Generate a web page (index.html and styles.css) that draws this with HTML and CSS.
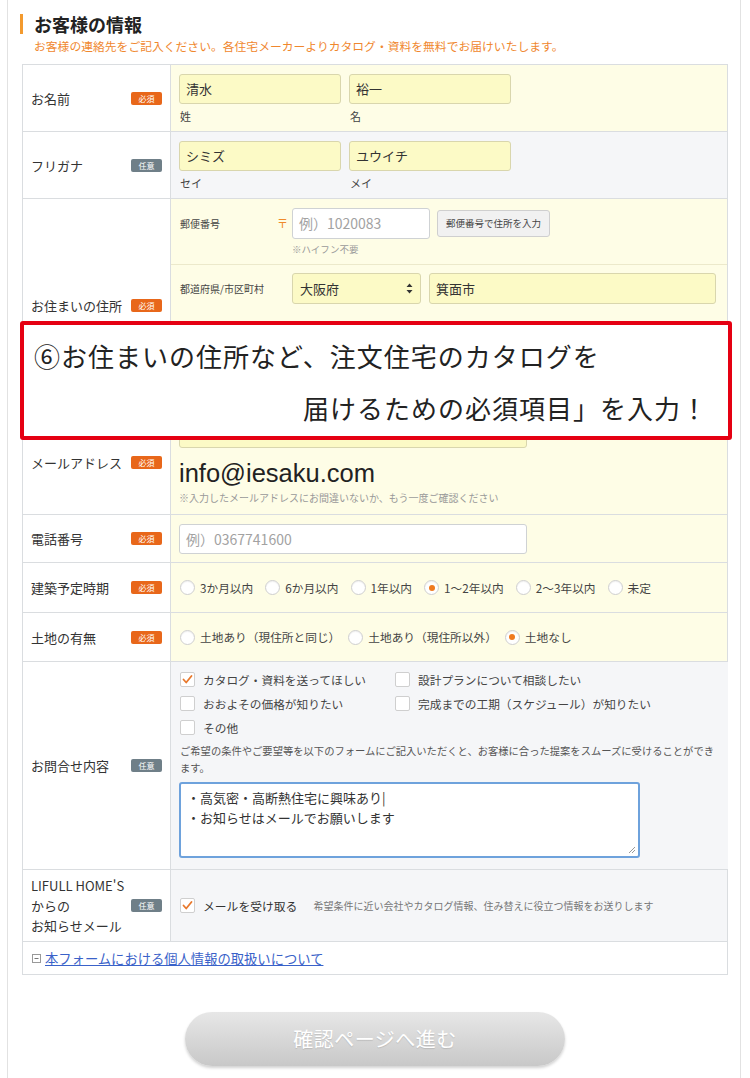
FILE: index.html
```html
<!DOCTYPE html>
<html lang="ja">
<head>
<meta charset="utf-8">
<title>お客様の情報</title>
<link rel="stylesheet" href="styles.css">
</head>
<body>
<div class="frame">
  <h2 class="title">お客様の情報</h2>
  <p class="lead">お客様の連絡先をご記入ください。各住宅メーカーよりカタログ・資料を無料でお届けいたします。</p>

  <div class="form">
    <div class="row h-name">
      <div class="label"><span>お名前</span><span class="badge req">必須</span></div>
      <div class="cell pad-top">
        <div class="pair">
          <div class="field"><div class="input yl">清水</div><div class="sub">姓</div></div>
          <div class="field"><div class="input yl">裕一</div><div class="sub">名</div></div>
        </div>
      </div>
    </div>

    <div class="row h-kana">
      <div class="label"><span>フリガナ</span><span class="badge opt">任意</span></div>
      <div class="cell opt-cell pad-top">
        <div class="pair">
          <div class="field"><div class="input yl">シミズ</div><div class="sub">セイ</div></div>
          <div class="field"><div class="input yl">ユウイチ</div><div class="sub">メイ</div></div>
        </div>
      </div>
    </div>

    <div class="row h-addr">
      <div class="label"><span>お住まいの住所</span><span class="badge req">必須</span></div>
      <div class="cell no-pad">
        <div class="subrow s-zip">
          <div class="sublabel"><span>郵便番号</span><span class="zipmark">〒</span></div>
          <div>
            <div class="zipline">
              <div class="input wh zip"><span class="ph">例）1020083</span></div>
              <div class="zipbtn">郵便番号で住所を入力</div>
            </div>
            <div class="hint">※ハイフン不要</div>
          </div>
        </div>
        <div class="subrow s-pref">
          <div class="sublabel"><span>都道府県/市区町村</span></div>
          <div class="prefline">
            <div class="input yl select"><span>大阪府</span>
              <svg width="7" height="11" viewBox="0 0 7 11"><path d="M3.5 0.5 L6.5 4 L0.5 4 Z M3.5 10.5 L6.5 7 L0.5 7 Z" fill="#333"/></svg>
            </div>
            <div class="input yl city">箕面市</div>
          </div>
        </div>
        <div class="subrow s-hidden">
          <div class="sublabel"></div>
          <div><div class="input yl wide"></div></div>
        </div>
        <div class="subrow s-hidden last">
          <div class="sublabel"></div>
          <div><div class="input wh wide"></div></div>
        </div>
      </div>
    </div>

    <div class="row h-mail">
      <div class="label"><span>メールアドレス</span><span class="badge req">必須</span></div>
      <div class="cell mail-cell">
        <div class="input yl mid"></div>
        <div class="mailtext">info@iesaku.com</div>
        <div class="note">※入力したメールアドレスにお間違いないか、もう一度ご確認ください</div>
      </div>
    </div>

    <div class="row h-tel">
      <div class="label"><span>電話番号</span><span class="badge req">必須</span></div>
      <div class="cell center">
        <div class="input wh mid"><span class="ph">例）0367741600</span></div>
      </div>
    </div>

    <div class="row h-when">
      <div class="label"><span>建築予定時期</span><span class="badge req">必須</span></div>
      <div class="cell center">
        <div class="radios">
          <span class="ropt"><span class="radio"></span>3か月以内</span>
          <span class="ropt"><span class="radio"></span>6か月以内</span>
          <span class="ropt"><span class="radio"></span>1年以内</span>
          <span class="ropt"><span class="radio on"></span>1〜2年以内</span>
          <span class="ropt"><span class="radio"></span>2〜3年以内</span>
          <span class="ropt"><span class="radio"></span>未定</span>
        </div>
      </div>
    </div>

    <div class="row h-land">
      <div class="label"><span>土地の有無</span><span class="badge req">必須</span></div>
      <div class="cell center">
        <div class="radios land">
          <span class="ropt"><span class="radio"></span>土地あり（現住所と同じ）</span>
          <span class="ropt"><span class="radio"></span>土地あり（現住所以外）</span>
          <span class="ropt"><span class="radio on"></span>土地なし</span>
        </div>
      </div>
    </div>

    <div class="row h-ask">
      <div class="label"><span>お問合せ内容</span><span class="badge opt">任意</span></div>
      <div class="cell opt-cell ask-cell">
        <div class="checks">
          <span class="copt"><span class="check on"><svg width="13" height="13" viewBox="0 0 13 13"><path d="M2.5 6.5 L5.2 9.5 L10.5 3" fill="none" stroke="#e8782c" stroke-width="1.8" stroke-linecap="round" stroke-linejoin="round"/></svg></span>カタログ・資料を送ってほしい</span>
          <span class="copt"><span class="check"></span>設計プランについて相談したい</span>
          <span class="copt"><span class="check"></span>おおよその価格が知りたい</span>
          <span class="copt"><span class="check"></span>完成までの工期（スケジュール）が知りたい</span>
          <span class="copt"><span class="check"></span>その他</span>
        </div>
        <p class="desc">ご希望の条件やご要望等を以下のフォームにご記入いただくと、お客様に合った提案をスムーズに受けることができます。</p>
        <div class="textarea">
          <div>・高気密・高断熱住宅に興味あり|</div>
          <div>・お知らせはメールでお願いします</div>
          <svg class="grip" width="8" height="8" viewBox="0 0 8 8"><path d="M7 1 L1 7 M7 4 L4 7" stroke="#999" stroke-width="1"/></svg>
        </div>
      </div>
    </div>

    <div class="row h-news">
      <div class="label multi"><span class="ml">LIFULL HOME'S<br>からの<br>お知らせメール</span><span class="badge opt">任意</span></div>
      <div class="cell opt-cell center">
        <div class="newsline">
          <span class="check on"><svg width="13" height="13" viewBox="0 0 13 13"><path d="M2.5 6.5 L5.2 9.5 L10.5 3" fill="none" stroke="#e8782c" stroke-width="1.8" stroke-linecap="round" stroke-linejoin="round"/></svg></span>
          <span class="newslabel">メールを受け取る</span>
          <span class="newsnote">希望条件に近い会社やカタログ情報、住み替えに役立つ情報をお送りします</span>
        </div>
      </div>
    </div>

    <div class="linkrow">
      <span class="toggle"><svg width="9" height="9" viewBox="0 0 9 9"><rect x="0.5" y="0.5" width="8" height="8" fill="#fff" stroke="#999"/><path d="M2.5 4.5 H6.5" stroke="#777"/></svg></span>
      <a class="plink" href="#">本フォームにおける個人情報の取扱いについて</a>
    </div>
  </div>

  <div class="btnwrap">
    <div class="submit">確認ページへ進む</div>
  </div>

  <div class="callout">
    <div class="l1">⑥お住まいの住所など、注文住宅のカタログを</div>
    <div class="l2">届けるための必須項目」を入力！</div>
  </div>
</div>
</body>
</html>
```

FILE: styles.css
```css
* { box-sizing: border-box; }
html, body { margin: 0; padding: 0; }
body {
  background: #fff;
  font-family: "Noto Sans CJK JP", "Noto Sans", sans-serif;
  color: #333;
  width: 750px;
  height: 1078px;
  overflow: hidden;
}
.frame {
  position: relative;
  margin: 0 9px 0 7px;
  height: 1078px;
  border-left: 1px solid #e2e2e2;
  border-right: 1px solid #e2e2e2;
  padding: 14px 12px 0 14px;
}
.title {
  margin: 0 0 0 -2px;
  padding-left: 11px;
  border-left: 3px solid #f39a2e;
  font-size: 18px;
  line-height: 20px;
  font-weight: bold;
  color: #222;
}
.lead {
  margin: 4px 0 0 12px;
  font-size: 11.8px;
  line-height: 16px;
  color: #f0872e;
}
.form {
  margin-top: 10px;
  border: 1px solid #dadde0;
  border-bottom: none;
}
.row {
  display: grid;
  grid-template-columns: 148px 1fr;
  border-bottom: 1px solid #dadde0;
}
.h-name { height: 67px; }
.h-kana { height: 67px; }
.h-addr { height: 212px; }
.h-mail { height: 104px; }
.h-tel { height: 48px; }
.h-when { height: 50px; }
.h-land { height: 49px; }
.h-ask { height: 208px; }
.h-news { height: 72px; }

.label {
  display: flex;
  align-items: center;
  justify-content: space-between;
  padding: 0 8px 0 8px;
  border-right: 1px solid #dadde0;
  background: #fff;
  font-size: 13px;
  color: #333;
}
.label .ml {
  font-size: 13px;
  line-height: 20px;
}
.badge {
  display: inline-block;
  width: 31px;
  height: 13px;
  line-height: 13px;
  font-size: 8px;
  text-align: center;
  color: #fff;
  border-radius: 2px;
  flex: none;
}
.badge.req { background: #e8671a; }
.badge.opt { background: #6f7f88; }

.cell {
  background: #fefde6;
  padding: 0 8px;
}
.cell.opt-cell { background: #f5f6f8; }
.cell.pad-top { padding-top: 9px; }
.cell.no-pad { padding: 0; }
.cell.center { display: flex; align-items: center; }

.pair { display: flex; gap: 8px; }
.field { width: 162px; }
.sub {
  margin-top: 4px;
  font-size: 11px;
  line-height: 16px;
  padding-left: 1px;
  color: #444;
}
.input {
  height: 30px;
  border-radius: 3px;
  padding: 0 6px;
  font-size: 13px;
  line-height: 28px;
  color: #333;
}
.input.yl {
  background: #fcfac6;
  border: 1px solid #d9d6ad;
}
.input.wh {
  background: #fff;
  border: 1px solid #cfd2d4;
}
.ph { color: #a2a2a2; font-size: 14px; }

.subrow {
  display: grid;
  grid-template-columns: 113px 1fr;
  padding-left: 8px;
  border-bottom: 1px solid #ece9cb;
}
.subrow.last { border-bottom: none; }
.s-zip { height: 66px; padding-top: 9px; }
.s-pref { height: 60px; padding-top: 8px; }
.s-hidden { height: 43px; padding-top: 6px; }
.sublabel {
  display: flex;
  justify-content: space-between;
  font-size: 10px;
  line-height: 31px;
  padding-left: 1px;
  padding-right: 4px;
  color: #444;
}
.zipmark { color: #f08a2a; font-size: 11px; }
.zipline { display: flex; align-items: center; gap: 7px; }
.input.zip { width: 138px; height: 31px; line-height: 29px; }
.zipbtn {
  width: 113px;
  height: 27px;
  line-height: 25px;
  font-size: 9.5px;
  text-align: center;
  background: #f1f1f1;
  border: 1px solid #cfcfcf;
  border-radius: 3px;
  color: #444;
}
.hint {
  margin-top: 3px;
  font-size: 9.5px;
  line-height: 14px;
  color: #9a9a9a;
}
.prefline { display: flex; gap: 8px; }
.input.select {
  width: 129px;
  height: 31px;
  line-height: 29px;
  display: flex;
  justify-content: space-between;
  align-items: center;
  padding: 0 7px 0 7px;
}
.input.city { width: 287px; height: 31px; line-height: 29px; }
.input.wide { width: 420px; }

.mail-cell { padding-top: 7px; }
.input.mid { width: 348px; }
.mailtext {
  margin-top: 10px;
  font-family: "Liberation Sans", Arial, sans-serif;
  font-size: 25.5px;
  line-height: 30px;
  color: #222;
}
.note {
  margin-top: 3px;
  font-size: 10px;
  line-height: 14px;
  color: #999;
}

.radios {
  display: flex;
  align-items: center;
  gap: 12px;
  font-size: 11.7px;
  color: #444;
  padding-left: 1px;
}
.radios.land { gap: 8px; }
.ropt { display: flex; align-items: center; gap: 5px; line-height: 16px; }
.radio {
  width: 15px;
  height: 15px;
  border-radius: 50%;
  background: #fff;
  border: 1px solid #cfcfcf;
  box-shadow: inset 0 1px 1px rgba(0,0,0,0.06);
  display: flex;
  align-items: center;
  justify-content: center;
  flex: none;
}
.radio.on::after {
  content: "";
  width: 6px;
  height: 6px;
  border-radius: 50%;
  background: #ef7a20;
}

.ask-cell { padding-top: 5px; }
.checks {
  display: grid;
  grid-template-columns: 215px auto;
  font-size: 11.7px;
  color: #444;
  padding-left: 1px;
}
.copt { display: flex; align-items: center; gap: 8px; height: 24px; }
.check {
  width: 15px;
  height: 15px;
  border: 1px solid #cfcfcf;
  border-radius: 2px;
  background: #fff;
  display: flex;
  align-items: center;
  justify-content: center;
  flex: none;
}
.desc {
  margin: 3px 0 0 1px;
  width: 540px;
  font-size: 10.3px;
  line-height: 17px;
  color: #555;
}
.textarea {
  position: relative;
  margin-top: 6px;
  width: 461px;
  height: 76px;
  background: #fff;
  border: 2px solid #6ea2dc;
  border-radius: 3px;
  padding: 4px 6px;
  font-size: 13px;
  line-height: 20px;
  color: #333;
}
.grip { position: absolute; right: 2px; bottom: 2px; }

.newsline { display: flex; align-items: center; padding-left: 1px; }
.newslabel { margin-left: 8px; font-size: 11.8px; color: #333; }
.newsnote { margin-left: 16px; font-size: 10px; color: #777; }

.linkrow {
  height: 33px;
  display: flex;
  align-items: center;
  padding-left: 9px;
  background: #fff;
  border-bottom: 1px solid #dadde0;
}
.toggle { display: flex; margin-right: 4px; }
.plink {
  font-size: 13.3px;
  color: #3a62c9;
  text-decoration: underline;
}

.btnwrap {
  display: flex;
  justify-content: center;
  margin-top: 37px;
}
.submit {
  width: 380px;
  height: 54px;
  border-radius: 27px;
  background: linear-gradient(#e7e7e7, #c8c8c8);
  box-shadow: 0 2px 3px rgba(0,0,0,0.18);
  color: #fff;
  font-size: 20px;
  line-height: 54px;
  text-align: center;
  text-shadow: 0 1px 1px rgba(0,0,0,0.12);
  letter-spacing: 0.5px;
}

.callout {
  position: absolute;
  left: 12px;
  top: 321px;
  width: 712px;
  height: 119px;
  border: 4px solid #e50012;
  border-radius: 3px;
  background: #fff;
  padding-top: 5px;
  font-size: 26px;
  line-height: 52px;
  letter-spacing: 1px;
  color: #222;
}
.callout .l1 { padding-left: 10px; }
.callout .l2 { padding-left: 279px; }
```
